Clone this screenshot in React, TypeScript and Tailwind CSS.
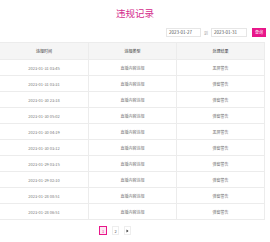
import React from "react";

const rows = [
  { time: "2023-01-31 03:45", type: "直播内容违规", result: "黑屏警告" },
  { time: "2023-01-31 03:31", type: "直播内容违规", result: "弹窗警告" },
  { time: "2023-01-30 23:18", type: "直播内容违规", result: "弹窗警告" },
  { time: "2023-01-30 05:02", type: "直播内容违规", result: "弹窗警告" },
  { time: "2023-01-30 04:19", type: "直播内容违规", result: "黑屏警告" },
  { time: "2023-01-30 03:12", type: "直播内容违规", result: "弹窗警告" },
  { time: "2023-01-29 03:15", type: "直播内容违规", result: "弹窗警告" },
  { time: "2023-01-29 02:10", type: "直播内容违规", result: "弹窗警告" },
  { time: "2023-01-28 08:51", type: "直播内容违规", result: "弹窗警告" },
  { time: "2023-01-28 06:51", type: "直播内容违规", result: "弹窗警告" },
];

function App() {
  return (
    <div
      className="w-[270px] h-[242px] bg-white overflow-hidden"
      style={{ fontFamily: '"Noto Sans CJK SC", "Liberation Sans", sans-serif' }}
    >
      <h1 className="pt-[7px] text-center text-[9.5px] leading-[12px] text-[#d42a8c]">
        违规记录
      </h1>
      <div className="mt-[9px] flex items-center justify-end pr-[4px]">
        <div className="w-[35px] h-[9px] border border-[#e6e6e6] text-[4.5px] leading-[7px] text-[#555] pl-[2px]">
          2023-01-27
        </div>
        <span className="mx-[3px] text-[4px] text-[#aaa]">到</span>
        <div className="w-[36px] h-[9px] border border-[#e6e6e6] text-[4.5px] leading-[7px] text-[#555] pl-[2px]">
          2023-01-31
        </div>
        <button className="ml-[5px] w-[14px] h-[9px] bg-[#e8168a] text-white text-[4px] leading-[9px]">
          查询
        </button>
      </div>
      <div className="mt-[5px] w-[265px] border-t border-r border-[#ececec]">
        <div className="grid grid-cols-3 h-[17px] bg-[#f5f5f5] border-b border-[#ececec] text-[4px] text-[#333]">
          <div className="flex items-center justify-center">违规时间</div>
          <div className="flex items-center justify-center border-l border-[#ececec]">违规类型</div>
          <div className="flex items-center justify-center border-l border-[#ececec]">处理结果</div>
        </div>
        {rows.map((r, i) => (
          <div
            key={i}
            className="grid grid-cols-3 h-[16px] border-b border-[#ececec] text-[4px] text-[#777]"
          >
            <div className="flex items-center justify-center">{r.time}</div>
            <div className="flex items-center justify-center border-l border-[#ececec]">{r.type}</div>
            <div className="flex items-center justify-center border-l border-[#ececec]">{r.result}</div>
          </div>
        ))}
      </div>
      <div className="mt-[6px] w-[230px] flex justify-center gap-[5px] text-[4px]">
        <div className="w-[8px] h-[9px] flex items-center justify-center border border-[#e8168a] bg-[#fde8f2] text-[#e8168a]">
          1
        </div>
        <div className="w-[7px] h-[9px] flex items-center justify-center border border-[#eee] text-[#555]">
          2
        </div>
        <div className="w-[7px] h-[9px] flex items-center justify-center border border-[#eee] text-[#333]">
          <svg width="3" height="4" viewBox="0 0 3 4">
            <path d="M0.5 0.5 L2.5 2 L0.5 3.5 Z" fill="#333" />
          </svg>
        </div>
      </div>
    </div>
  );
}

export default App;
